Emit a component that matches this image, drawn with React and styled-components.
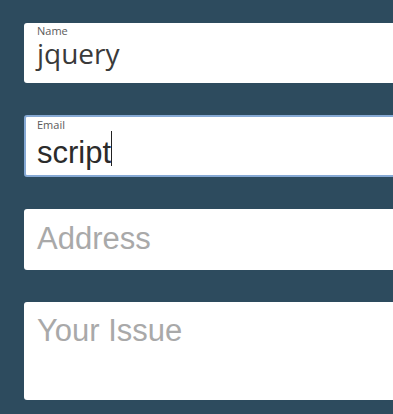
import React from 'react'
import styled, { createGlobalStyle } from 'styled-components'

const GlobalStyle = createGlobalStyle`
    html, body {
        margin: 0;
        padding: 0;
        background: #2d4b5e;
        overflow: hidden;
    }
`;

const Form = styled.div`
    display: flex;
    flex-direction: column;
    gap: 32px;
    padding: 23px 0 0 24px;
    height: 414px;
    box-sizing: border-box;
`;

const Field = styled.div`
    width: 420px;
    height: ${props => props.h}px;
    box-sizing: border-box;
    background: #fff;
    border-radius: 3px;
    padding: ${props => props.pt}px 0 0 ${props => props.focused ? 11 : 13}px;
    border: ${props => props.focused ? '2px solid #86a9d4' : 'none'};
    display: flex;
    flex-direction: column;
`;

const Label = styled.div`
    font-family: "Open Sans", sans-serif;
    font-size: 11px;
    line-height: 13px;
    color: #5a5a5a;
`;

const Value = styled.div`
    font-family: ${props => props.soft ? '"Open Sans", sans-serif' : '"Liberation Sans", Arial, sans-serif'};
    font-size: ${props => props.soft ? 28 : 31}px;
    line-height: ${props => props.soft ? 32 : 36}px;
    color: ${props => props.placeholder ? '#a9a9a9' : props.soft ? '#3a3a3a' : '#2b2b2b'};
    white-space: nowrap;
`;

const Caret = styled.span`
    display: inline-block;
    width: 1px;
    height: 35px;
    background: #222;
    vertical-align: -3px;
`;

export default function App() {
    return (
        <>
            <GlobalStyle />
            <Form>
                <Field h={60} pt={1}>
                    <Label>Name</Label>
                    <Value soft>jquery</Value>
                </Field>
                <Field h={62} pt={1} focused>
                    <Label>Email</Label>
                    <Value>script<Caret /></Value>
                </Field>
                <Field h={61} pt={12}>
                    <Value placeholder="1">Address</Value>
                </Field>
                <Field h={98} pt={11}>
                    <Value placeholder="1">Your Issue</Value>
                </Field>
            </Form>
        </>
    )
}
